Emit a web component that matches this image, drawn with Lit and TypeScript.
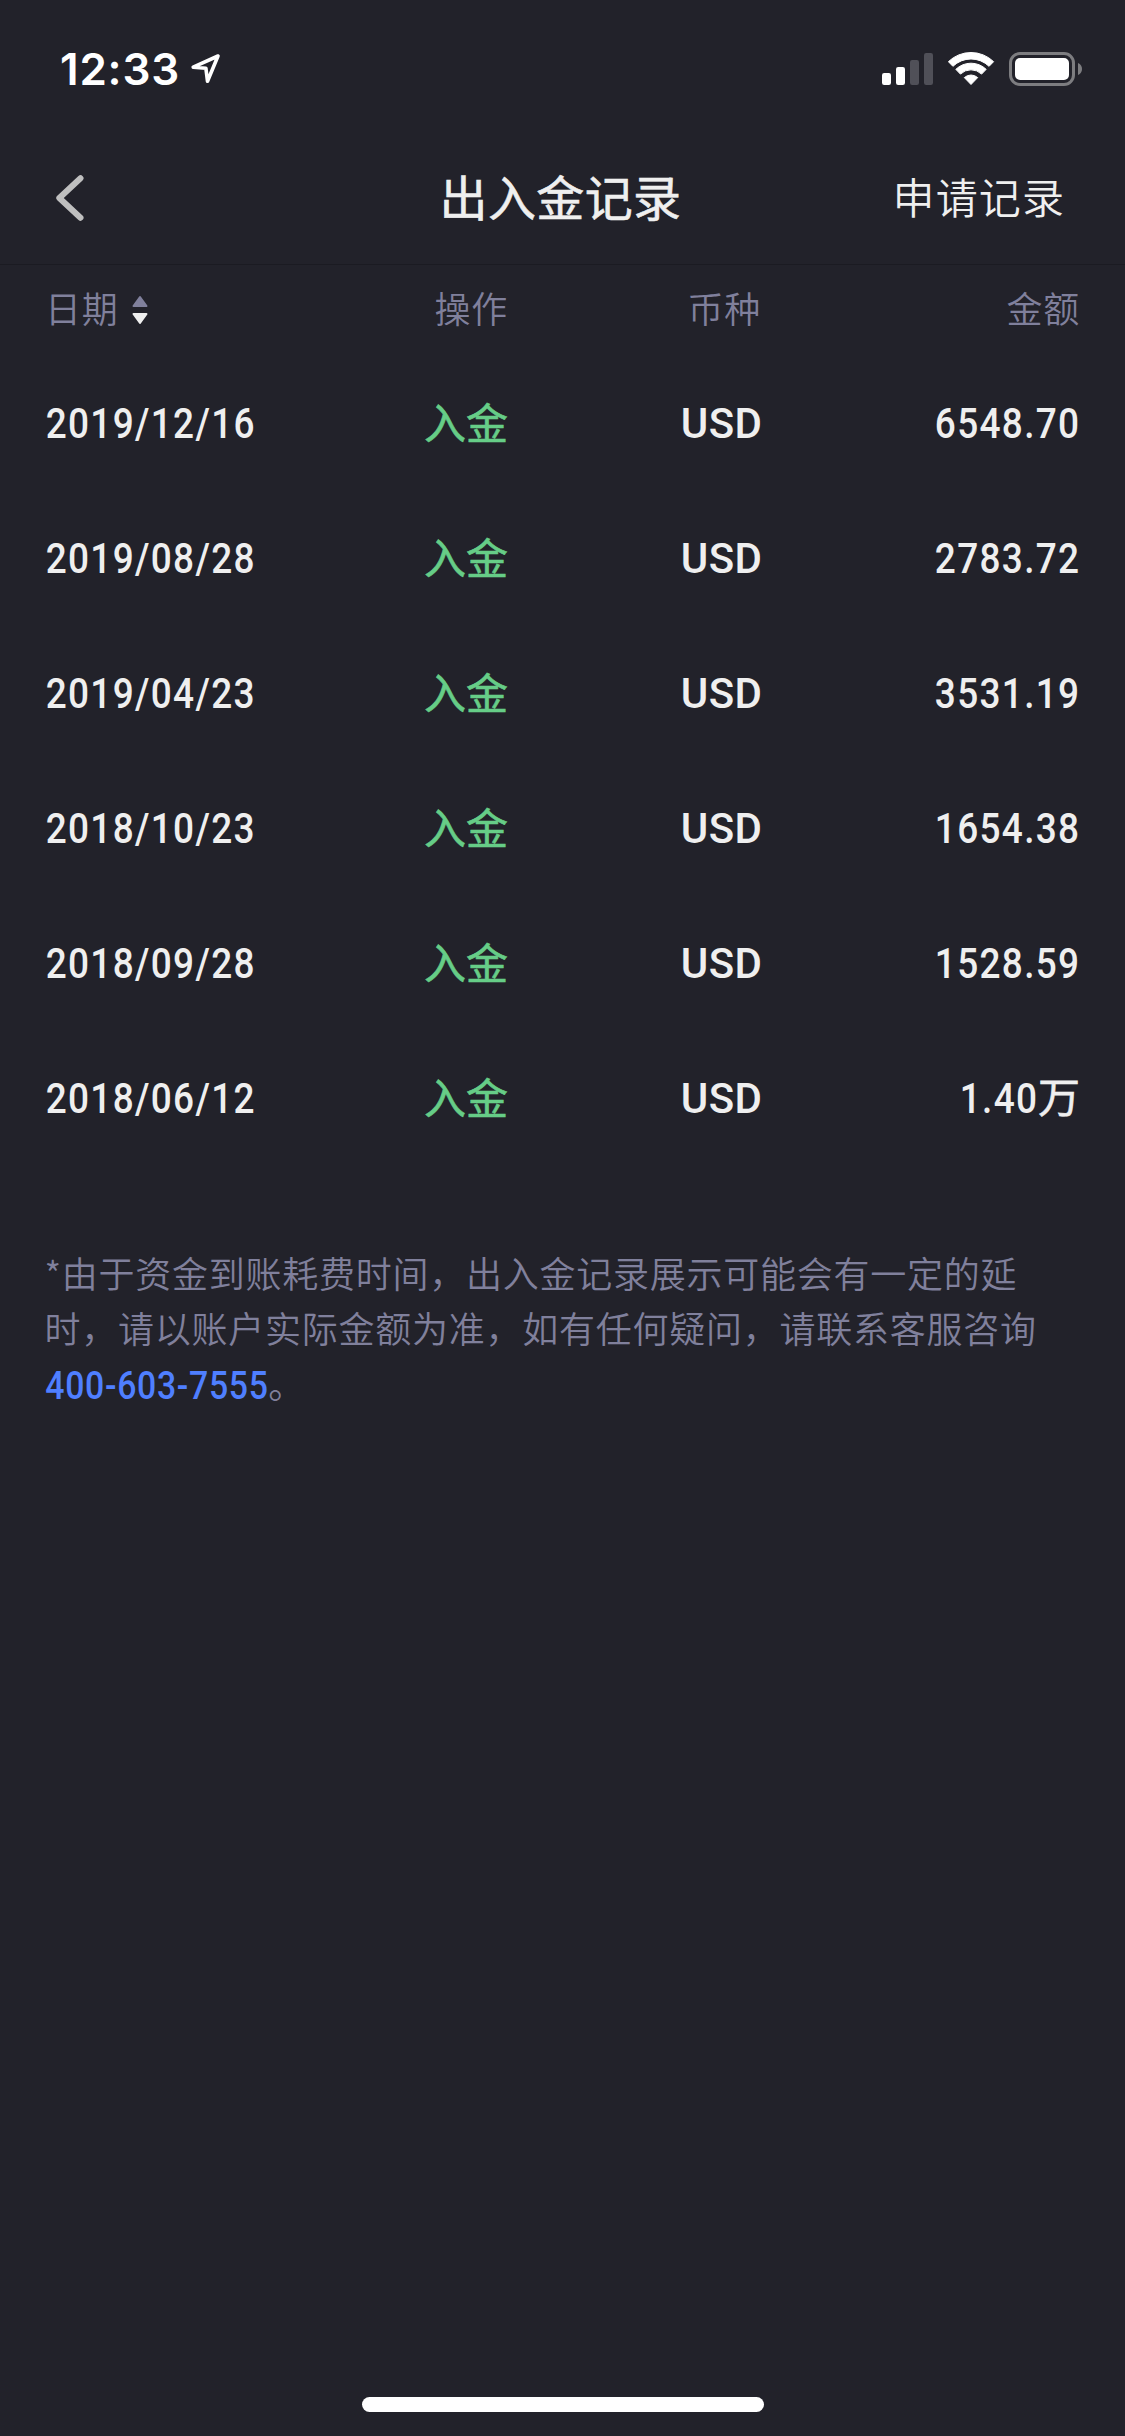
import { LitElement, html, css, svg } from "lit";
import { customElement, property } from "lit/decorators.js";

interface FundRecord {
  date: string;
  action: string;
  currency: string;
  amount: string;
  unit?: string;
}

const RECORDS: FundRecord[] = [
  { date: "2019/12/16", action: "入金", currency: "USD", amount: "6548.70" },
  { date: "2019/08/28", action: "入金", currency: "USD", amount: "2783.72" },
  { date: "2019/04/23", action: "入金", currency: "USD", amount: "3531.19" },
  { date: "2018/10/23", action: "入金", currency: "USD", amount: "1654.38" },
  { date: "2018/09/28", action: "入金", currency: "USD", amount: "1528.59" },
  { date: "2018/06/12", action: "入金", currency: "USD", amount: "1.40", unit: "万" },
];

// Annular sector of the wifi symbol, opening upwards from (23, 33).
const wifiBand = (outer: number, inner: number) => {
  const s = Math.sin(0.77);
  const c = Math.cos(0.77);
  const p = (r: number, side: number) => `${23 + side * r * s} ${33 - r * c}`;
  return svg`<path d="M${p(outer, -1)} A${outer} ${outer} 0 0 1 ${p(outer, 1)} L${p(inner, 1)} A${inner} ${inner} 0 0 0 ${p(inner, -1)} Z"
    fill="#fff" stroke="#fff" stroke-width="1" stroke-linejoin="round"/>`;
};

@customElement("status-bar")
export class StatusBar extends LitElement {
  static styles = css`
    :host {
      display: flex;
      height: 132px;
      padding: 0 42px 0 60px;
      box-sizing: border-box;
      justify-content: space-between;
      align-items: flex-start;
      color: #fff;
    }
    .left, .right { display: flex; align-items: flex-start; }
    .left { padding-top: 43px; }
    .right { padding-top: 50px; }
    .time {
      font: 600 44px/52px Inter, sans-serif;
      letter-spacing: 0.8px;
      width: 130px;
      white-space: nowrap;
    }
    .location { margin-top: 9px; }
    .wifi { margin-left: 14px; }
    .battery { margin-left: 13px; }
    svg { display: block; }
  `;

  render() {
    return html`
      <div class="left">
        <span class="time">12:33</span>
        <svg class="location" width="32" height="34" viewBox="0 0 32 34">
          <path d="M28 4 L3.2 15.2 L15.9 16.2 L17.5 29.3 Z" fill="none" stroke="#fff" stroke-width="3.6" stroke-linejoin="round"/>
        </svg>
      </div>
      <div class="right">
        <svg width="52" height="38" viewBox="0 0 52 38">
          <rect x="0" y="23" width="9" height="12" rx="2.2" fill="#fff"/>
          <rect x="14" y="17" width="9" height="18" rx="2.2" fill="#fff"/>
          <rect x="28" y="10" width="9" height="25" rx="2.2" fill="#505058"/>
          <rect x="42" y="3" width="9" height="32" rx="2.2" fill="#505058"/>
        </svg>
        <svg class="wifi" width="48" height="38" viewBox="0 -2 48 38">
          ${wifiBand(32.5, 26)}
          ${wifiBand(21.8, 15.2)}
          <path d="M23 32.5 L16.3 25.6 A10 10 0 0 1 29.7 25.6 Z" fill="#fff" stroke="#fff" stroke-width="1" stroke-linejoin="round"/>
        </svg>
        <svg class="battery" width="74" height="38" viewBox="0 0 74 38">
          <rect x="1.5" y="3.5" width="63" height="31" rx="9.5" fill="none" stroke="#7d7d80" stroke-width="3"/>
          <rect x="6" y="8" width="54" height="22" rx="5" fill="#fff"/>
          <path d="M69 13 C74.4 15 74.4 23 69 25 Z" fill="#7d7d80"/>
        </svg>
      </div>
    `;
  }
}

@customElement("nav-bar")
export class NavBar extends LitElement {
  @property() heading = "";
  @property() action = "";

  static styles = css`
    :host {
      display: grid;
      grid-template-columns: 1fr auto 1fr;
      align-items: center;
      height: 133px;
      box-sizing: border-box;
      padding: 0 60px 0 54px;
      border-bottom: 1px solid #1b1b22;
      color: #efefef;
    }
    .back { display: block; }
    .heading {
      margin: 0 0 7px 2px;
      font-size: 48px;
      font-weight: 400;
      line-height: 60px;
      letter-spacing: 0.4px;
      -webkit-text-stroke: 0.6px currentColor;
    }
    .action {
      justify-self: end;
      margin-bottom: 4px;
      font-size: 42px;
      font-weight: 350;
      line-height: 60px;
      letter-spacing: 1.1px;
    }
  `;

  render() {
    return html`
      <svg class="back" width="32" height="48" viewBox="0 0 32 48">
        <path d="M26.5 4.2 L5.3 24 L26.5 43.8" fill="none" stroke="#bfbfbf" stroke-width="6" stroke-linecap="round" stroke-linejoin="round"/>
      </svg>
      <h1 class="heading">${this.heading}</h1>
      <span class="action">${this.action}</span>
    `;
  }
}

@customElement("record-table")
export class RecordTable extends LitElement {
  @property({ attribute: false }) records: FundRecord[] = [];

  static styles = css`
    :host { display: block; padding: 0 45px; }
    .row {
      display: grid;
      grid-template-columns: 263px 200px 253px 319px;
      align-items: center;
      height: 135px;
      color: #efefef;
      font-size: 42px;
      line-height: 60px;
    }
    .row > * { text-align: right; white-space: nowrap; }
    .row > .date { text-align: left; }
    .head {
      height: 90px;
      box-sizing: border-box;
      padding-bottom: 7px;
      color: #80809c;
      font-size: 36px;
      font-weight: 350;
      letter-spacing: 0.8px;
    }
    .head > .date { display: flex; align-items: center; gap: 13px; }
    .sort { display: block; margin-top: 6px; }
    .num {
      font-family: Roboto, "Noto Sans CJK SC", sans-serif;
      font-weight: 490;
      padding-top: 3px;
    }
    .digits {
      display: inline-block;
      letter-spacing: 1.5px;
      transform: scaleX(0.88);
      transform-origin: right;
    }
    .date .digits { transform-origin: 6px 50%; }
    .currency { letter-spacing: 0.5px; margin-right: -1.5px; }
    .action {
      color: #66cd87;
      font-weight: 400;
      padding-bottom: 3px;
      -webkit-text-stroke: 0.6px currentColor;
    }
    .unit {
      font-family: "Noto Sans CJK SC", sans-serif;
      font-weight: 400;
      line-height: 1;
      -webkit-text-stroke: 0.6px currentColor;
    }
  `;

  render() {
    return html`
      <div class="row head">
        <span class="date">
          <span>日期</span>
          <svg class="sort" width="16" height="30" viewBox="0 0 16 30">
            <path d="M8 2 L14.5 11 H1.5 Z" fill="#80809c" stroke="#80809c" stroke-width="2" stroke-linejoin="round"/>
            <path d="M8 28 L14.5 19 H1.5 Z" fill="#efefef" stroke="#efefef" stroke-width="2" stroke-linejoin="round"/>
          </svg>
        </span>
        <span>操作</span><span>币种</span><span>金额</span>
      </div>
      ${this.records.map(
        (r) => html`
          <div class="row">
            <span class="date num"><span class="digits">${r.date}</span></span>
            <span class="action">${r.action}</span>
            <span class="num currency">${r.currency}</span>
            <span class="num"><span class="digits">${r.amount}</span>${r.unit ? html`<span class="unit">${r.unit}</span>` : null}</span>
          </div>
        `,
      )}
    `;
  }
}

@customElement("app-root")
export class AppRoot extends LitElement {
  static styles = css`
    :host {
      display: flex;
      flex-direction: column;
      height: 2436px;
      background: #22222a;
      font-family: "Noto Sans CJK SC", sans-serif;
      overflow: hidden;
    }
    .note {
      margin: 80px 45px 0 44.5px;
      color: #80809c;
      font-size: 36px;
      font-weight: 350;
      line-height: 55.4px;
      letter-spacing: 0.75px;
    }
    .phone {
      display: inline-block;
      margin-right: -27px;
      font-family: Roboto, sans-serif;
      font-size: 38px;
      font-weight: 500;
      line-height: 55px;
      color: #4f7fff;
      white-space: nowrap;
      transform: scaleX(0.89);
      transform-origin: 3px 50%;
    }
    .home {
      width: 402px;
      height: 15px;
      margin: auto auto 24px;
      border-radius: 8px;
      background: #fff;
    }
  `;

  render() {
    return html`
      <status-bar></status-bar>
      <nav-bar heading="出入金记录" action="申请记录"></nav-bar>
      <record-table .records=${RECORDS}></record-table>
      <p class="note">*由于资金到账耗费时间，出入金记录展示可能会有一定的延时，请以账户实际金额为准，如有任何疑问，请联系客服咨询<span class="phone">400-603-7555</span>。</p>
      <div class="home"></div>
    `;
  }
}
